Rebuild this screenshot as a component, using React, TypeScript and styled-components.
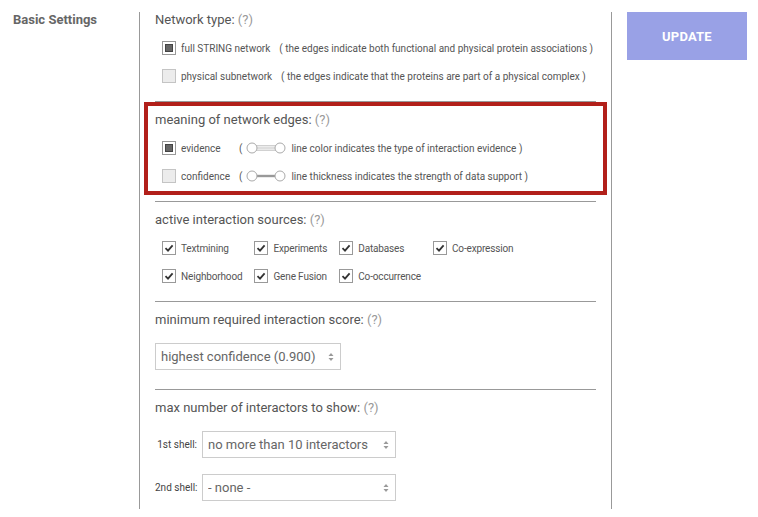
import styled, { createGlobalStyle } from 'styled-components';

const GlobalStyle = createGlobalStyle`
  body {
    margin: 0;
    background: #fff;
    font-family: Roboto, "Liberation Sans", Arial, sans-serif;
  }
`;

const Page = styled.div`
  display: flex;
  align-items: flex-start;
  padding-top: 12px;
`;

const SideLabel = styled.div`
  width: 139px;
  box-sizing: border-box;
  padding-left: 13px;
  font-size: 13px;
  line-height: 16px;
  font-weight: 700;
  color: #666;
`;

const Panel = styled.div`
  width: 473px;
  box-sizing: border-box;
  border-left: 1px solid #999;
  border-right: 1px solid #999;
  padding: 0 15px;
`;

const Section = styled.section<{ $highlight?: boolean }>`
  position: relative;
  padding: 10px 0 11px;
  border-bottom: 1px solid #999;

  &:first-child {
    padding-top: 0;
  }
  &:last-child {
    border-bottom: none;
    padding-bottom: 0;
  }

  ${(p) =>
    p.$highlight &&
    `
    &::after {
      content: '';
      position: absolute;
      top: 0;
      bottom: 6px;
      left: -11px;
      right: -11px;
      border: 4px solid #b2201a;
      pointer-events: none;
    }
  `}
`;

const Heading = styled.div`
  font-size: 13px;
  line-height: 16px;
  color: #555;
  margin-bottom: 6px;
`;

const Help = styled.span`
  color: #999;
`;

const OptionRow = styled.div`
  display: flex;
  align-items: center;
  height: 28px;
  padding-left: 7px;
  font-size: 10px;
  color: #555;
  white-space: nowrap;
`;

const OptionLabel = styled.span<{ $width?: number }>`
  margin-left: 5px;
  ${(p) => (p.$width ? `width: ${p.$width}px;` : '')}
`;

const Hint = styled.span`
  margin-left: 9px;
`;

const Paren = styled.span`
  display: inline-flex;
  align-items: center;
`;

const Box = styled.span<{ $state: 'on' | 'off' | 'check' }>`
  width: 14px;
  height: 14px;
  box-sizing: border-box;
  display: inline-flex;
  align-items: center;
  justify-content: center;
  flex-shrink: 0;
  border: 1px solid ${(p) => (p.$state === 'off' ? '#c4c4c4' : '#999')};
  background: ${(p) => (p.$state === 'off' ? '#ececec' : '#fff')};

  ${(p) =>
    p.$state === 'on' &&
    `
    &::before {
      content: '';
      width: 8px;
      height: 8px;
      box-sizing: border-box;
      background: #666;
      border: 1px solid #444;
    }
  `}
`;

const Grid = styled.div`
  display: grid;
  grid-template-columns: repeat(4, max-content);
  column-gap: 12px;
  padding-left: 7px;
`;

const GridItem = styled.div`
  display: flex;
  align-items: center;
  height: 28px;
  font-size: 10px;
  letter-spacing: -0.15px;
  color: #555;
  white-space: nowrap;
`;

const SelectRow = styled.div<{ $top: number }>`
  display: flex;
  align-items: center;
  margin: ${(p) => p.$top}px 0 8px;
`;

const ShellLabel = styled.span`
  width: 42px;
  margin-right: 5px;
  text-align: right;
  font-size: 10px;
  color: #444;
  white-space: nowrap;
`;

const SelectWrap = styled.div<{ $width: number }>`
  position: relative;
  width: ${(p) => p.$width}px;
`;

const Select = styled.select`
  appearance: none;
  -webkit-appearance: none;
  width: 100%;
  height: 27px;
  box-sizing: border-box;
  border: 1px solid #ccc;
  border-radius: 0;
  background: #fff;
  padding: 0 10px 0 5px;
  font-family: Roboto, "Liberation Sans", Arial, sans-serif;
  font-size: 13px;
  color: #666;
  outline: none;
`;

const Arrows = styled.svg`
  position: absolute;
  right: 7px;
  top: 50%;
  transform: translateY(-50%);
  pointer-events: none;
`;

const UpdateButton = styled.button`
  margin-left: 15px;
  width: 120px;
  height: 48px;
  border: none;
  background: #99a1e6;
  color: #fff;
  font-family: Roboto, "Liberation Sans", Arial, sans-serif;
  font-weight: 700;
  font-size: 13px;
  letter-spacing: 0.2px;
  cursor: pointer;
`;

const CheckMark = () => (
  <svg width="10" height="10" viewBox="0 0 10 10">
    <path d="M1.5 5.2 L4 7.6 L8.6 2.4" fill="none" stroke="#333" strokeWidth="1.8" />
  </svg>
);

const EdgeToggle = ({ kind }: { kind: 'evidence' | 'confidence' }) => (
  <svg width="40" height="12" viewBox="0 0 40 12" style={{ margin: '0 5px 0 4px' }}>
    {kind === 'evidence' ? (
      <g stroke="#b5b5b5" strokeWidth="0.9">
        <line x1="10" y1="3.8" x2="30" y2="3.8" />
        <line x1="10" y1="6" x2="30" y2="6" />
        <line x1="10" y1="8.2" x2="30" y2="8.2" />
      </g>
    ) : (
      <line x1="10" y1="6" x2="30" y2="6" stroke="#999" strokeWidth="2.4" />
    )}
    <circle cx="6" cy="6" r="5" fill="#fff" stroke="#aaa" strokeWidth="1" />
    <circle cx="34" cy="6" r="5" fill="#fff" stroke="#aaa" strokeWidth="1" />
  </svg>
);

const SelectArrows = () => (
  <Arrows width="6" height="9" viewBox="0 0 6 9">
    <path d="M0.5 3.5 L3 0.5 L5.5 3.5 Z" fill="#999" />
    <path d="M0.5 5.5 L3 8.5 L5.5 5.5 Z" fill="#999" />
  </Arrows>
);

const sources = [
  'Textmining',
  'Experiments',
  'Databases',
  'Co-expression',
  'Neighborhood',
  'Gene Fusion',
  'Co-occurrence',
];

export default function App() {
  return (
    <>
      <GlobalStyle />
      <Page>
        <SideLabel>Basic Settings</SideLabel>
        <Panel>
          <Section>
            <Heading>
              Network type: <Help>(?)</Help>
            </Heading>
            <OptionRow>
              <Box $state="on" />
              <OptionLabel>full STRING network</OptionLabel>
              <Hint>( the edges indicate both functional and physical protein associations )</Hint>
            </OptionRow>
            <OptionRow>
              <Box $state="off" />
              <OptionLabel>physical subnetwork</OptionLabel>
              <Hint>( the edges indicate that the proteins are part of a physical complex )</Hint>
            </OptionRow>
          </Section>

          <Section $highlight>
            <Heading>
              meaning of network edges: <Help>(?)</Help>
            </Heading>
            <OptionRow>
              <Box $state="on" />
              <OptionLabel $width={58}>evidence</OptionLabel>
              <Paren>
                (<EdgeToggle kind="evidence" />
                line color indicates the type of interaction evidence )
              </Paren>
            </OptionRow>
            <OptionRow>
              <Box $state="off" />
              <OptionLabel $width={58}>confidence</OptionLabel>
              <Paren>
                (<EdgeToggle kind="confidence" />
                line thickness indicates the strength of data support )
              </Paren>
            </OptionRow>
          </Section>

          <Section>
            <Heading>
              active interaction sources: <Help>(?)</Help>
            </Heading>
            <Grid>
              {sources.map((s) => (
                <GridItem key={s}>
                  <Box $state="check">
                    <CheckMark />
                  </Box>
                  <OptionLabel>{s}</OptionLabel>
                </GridItem>
              ))}
            </Grid>
          </Section>

          <Section>
            <Heading>
              minimum required interaction score: <Help>(?)</Help>
            </Heading>
            <SelectRow $top={15}>
              <SelectWrap $width={186}>
                <Select defaultValue="0.900">
                  <option value="0.900">highest confidence (0.900)</option>
                  <option value="0.700">high confidence (0.700)</option>
                  <option value="0.400">medium confidence (0.400)</option>
                  <option value="0.150">low confidence (0.150)</option>
                </Select>
                <SelectArrows />
              </SelectWrap>
            </SelectRow>
          </Section>

          <Section>
            <Heading>
              max number of interactors to show: <Help>(?)</Help>
            </Heading>
            <SelectRow $top={15}>
              <ShellLabel>1st shell:</ShellLabel>
              <SelectWrap $width={194}>
                <Select defaultValue="10">
                  <option value="10">no more than 10 interactors</option>
                  <option value="20">no more than 20 interactors</option>
                </Select>
                <SelectArrows />
              </SelectWrap>
            </SelectRow>
            <SelectRow $top={16}>
              <ShellLabel>2nd shell:</ShellLabel>
              <SelectWrap $width={194}>
                <Select defaultValue="none">
                  <option value="none">- none -</option>
                  <option value="5">no more than 5 interactors</option>
                </Select>
                <SelectArrows />
              </SelectWrap>
            </SelectRow>
          </Section>
        </Panel>
        <UpdateButton>UPDATE</UpdateButton>
      </Page>
    </>
  );
}
